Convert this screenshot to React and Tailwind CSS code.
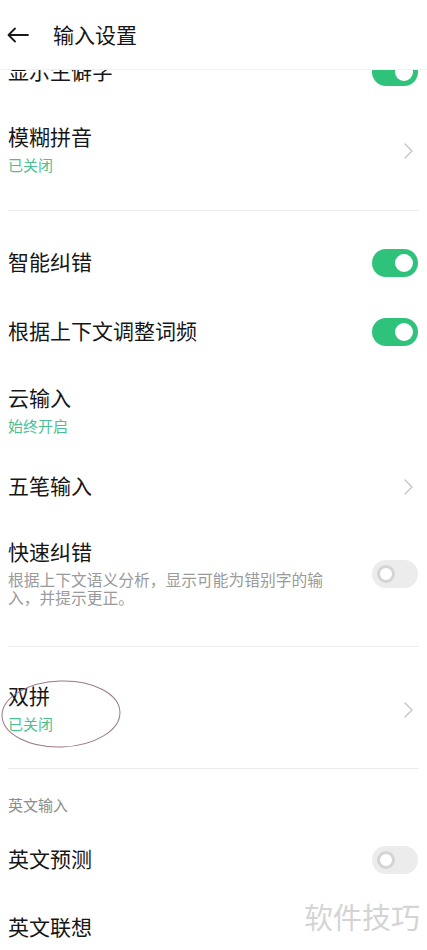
import React from 'react';

const font = { fontFamily: '"Noto Sans CJK SC", "Noto Sans", sans-serif' };

const Toggle = ({ on }) =>
  on ? (
    <div className="w-[46px] h-[28px] rounded-full bg-[#2ec27a] flex items-center justify-end pr-[5px] shrink-0">
      <div className="w-[18px] h-[18px] rounded-full bg-white" />
    </div>
  ) : (
    <div className="w-[46px] h-[28px] rounded-full bg-[#ececec] flex items-center pl-[5px] shrink-0">
      <div className="w-[18px] h-[18px] rounded-full bg-white border-[3px] border-[#d4d4d4]" />
    </div>
  );

const Chevron = () => (
  <svg width="12" height="18" viewBox="0 0 12 18" className="shrink-0 mr-[4px]">
    <path d="M3 2 L10 9 L3 16" fill="none" stroke="#c6c6c6" strokeWidth="1.4" strokeLinecap="round" strokeLinejoin="round" />
  </svg>
);

const Title = ({ children }) => (
  <div className="text-[21px] leading-[28px] text-[#161616]">{children}</div>
);

const Sub = ({ children }) => (
  <div className="text-[15px] leading-[22px] mt-[4px] text-[#4cbf92]">{children}</div>
);

const Row = ({ h, children, right }) => (
  <div className={`flex items-center justify-between pl-2 pr-[9px] ${h}`}>
    <div className="pb-[4px]">{children}</div>
    {right}
  </div>
);

const Divider = ({ h }) => (
  <div className={`flex items-center px-2 ${h}`}>
    <div className="w-full h-px bg-[#ececec]" />
  </div>
);

export default function App() {
  return (
    <div className="relative w-[427px] h-[950px] bg-white overflow-hidden flex flex-col" style={font}>
      {/* Header */}
      <div className="relative z-10 h-[70px] shrink-0 bg-white border-b border-[#f0f0f0] flex items-center pl-[7px]">
        <svg width="22" height="16" viewBox="0 0 22 16">
          <path d="M21 8 H2 M8 1.5 L1.5 8 L8 14.5" fill="none" stroke="#1a1a1a" strokeWidth="1.8" strokeLinecap="round" strokeLinejoin="round" />
        </svg>
        <div className="ml-[24px] text-[21px] text-[#161616]">输入设置</div>
      </div>

      {/* Scrolled list */}
      <div className="flex-1 overflow-hidden">
        <div className="-mt-[38px]">
          <Row h="h-[79px]" right={<Toggle on />}>
            <Title>显示生僻字</Title>
          </Row>
          <Row h="h-[79px]" right={<Chevron />}>
            <Title>模糊拼音</Title>
            <Sub>已关闭</Sub>
          </Row>
          <Divider h="h-[40px]" />
          <Row h="h-[66px]" right={<Toggle on />}>
            <Title>智能纠错</Title>
          </Row>
          <Row h="h-[72px]" right={<Toggle on />}>
            <Title>根据上下文调整词频</Title>
          </Row>
          <Row h="h-[87px]">
            <Title>云输入</Title>
            <Sub>始终开启</Sub>
          </Row>
          <Row h="h-[64px]" right={<Chevron />}>
            <Title>五笔输入</Title>
          </Row>
          <Row h="h-[110px]" right={<Toggle />}>
            <Title>快速纠错</Title>
            <div className="mt-[6px] max-w-[325px] text-[15.75px] leading-[18px] text-[#9a9a9a]">
              根据上下文语义分析，显示可能为错别字的输入，并提示更正。
            </div>
          </Row>
          <Divider h="h-[34px]" />
          <Row h="h-[94px]" right={<Chevron />}>
            <Title>双拼</Title>
            <Sub>已关闭</Sub>
          </Row>
          <Divider h="h-[22px]" />
          <div className="h-[56px] flex items-center pl-2 pb-[4px] text-[15px] text-[#8c8c8c]">英文输入</div>
          <Row h="h-[50px]" right={<Toggle />}>
            <Title>英文预测</Title>
          </Row>
          <Row h="h-[86px]">
            <Title>英文联想</Title>
          </Row>
        </div>
      </div>

      {/* Annotation ellipse */}
      <svg className="absolute left-0 top-[676px] pointer-events-none" width="130" height="76" viewBox="0 0 130 76">
        <ellipse cx="61" cy="38" rx="59" ry="33" transform="rotate(-2 61 38)" fill="none" stroke="#9a7887" strokeWidth="1" />
      </svg>

      {/* Watermark */}
      <div className="absolute left-[304px] top-[897px] text-[29px] leading-[38px] text-[#d4d4d4] pointer-events-none">
        软件技巧
      </div>
    </div>
  );
}
